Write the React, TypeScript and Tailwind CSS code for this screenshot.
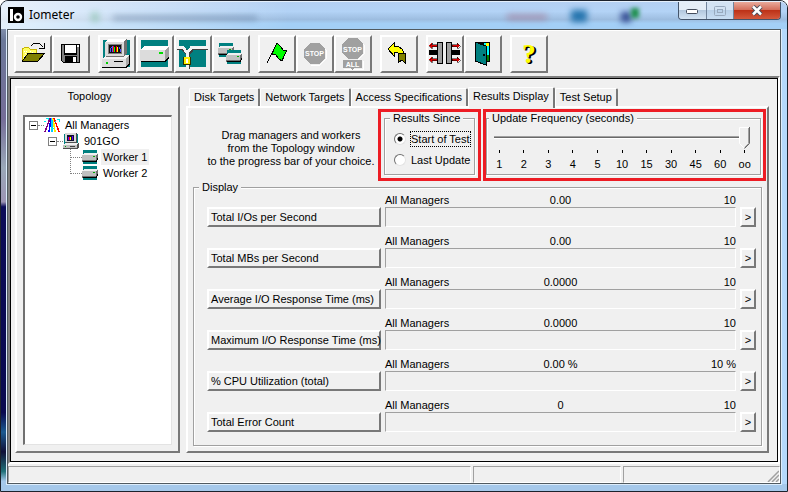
import { useState, type ReactNode } from "react";

const tabs = ["Disk Targets", "Network Targets", "Access Specifications", "Results Display", "Test Setup"];

const rows = [
  { name: "Total I/Os per Second", value: "0.00", max: "10" },
  { name: "Total MBs per Second", value: "0.00", max: "10" },
  { name: "Average I/O Response Time (ms)", value: "0.0000", max: "10" },
  { name: "Maximum I/O Response Time (ms)", value: "0.0000", max: "10" },
  { name: "% CPU Utilization (total)", value: "0.00 %", max: "10 %" },
  { name: "Total Error Count", value: "0", max: "10" },
];

const frequencies = ["1", "2", "3", "4", "5", "10", "15", "30", "45", "60", "oo"];

const raised =
  "border-2 border-t-white border-l-white border-r-[#787878] border-b-[#787878] bg-[#f0f0f0]";
const etched =
  "min-w-0 border border-[#a0a0a0] shadow-[1px_1px_0_#fff,inset_1px_1px_0_#fff]";

function Glyph({ children, size = 38 }: { children: ReactNode; size?: number }) {
  return (
    <svg viewBox={`0 0 ${size} ${size}`} width={size} height={size} shapeRendering="crispEdges" className="shrink-0" aria-hidden="true">
      {children}
    </svg>
  );
}

function OpenIcon() {
  return (
    <Glyph>
      <path d="M8.500 26V14l2-1.500h4l2 2h6v4" fill="#ffff60" stroke="#c8b400" />
      <path d="M10 16h1M12 16h1M14 18h1M11 18h1M16 16h1M10 21h1M12 20h1M18 17h1" stroke="#fff" />
      <path d="M8.500 26l6-8h16.500l-7 8z" fill="#808000" stroke="#000" />
      <path d="M17 11l3-3h5l4 4M30 8v5h-5" fill="none" stroke="#000" />
    </Glyph>
  );
}

function SaveIcon() {
  return (
    <Glyph>
      <path d="M9 9h19v19H11l-2-2z" fill="#000" />
      <path d="M10 10h17v17H11l-1-1z" fill="#808080" />
      <rect x="12" y="9" width="13" height="11" fill="#000" />
      <rect x="13" y="10" width="11" height="8" fill="#fff" />
      <rect x="25" y="10" width="2" height="2" fill="#fff" />
      <rect x="13" y="21" width="12" height="7" fill="#000" />
      <rect x="21" y="22" width="3" height="5" fill="#fff" />
    </Glyph>
  );
}

function ComputerShape() {
  return (
    <>
      <rect x="5" y="5" width="27" height="27" fill="#008080" />
      <path d="M4 24l5-4h23v8l-4 5H4z" fill="#000" />
      <path d="M4 24l4-4h23v8l-3 4H4z" fill="#a8a8a8" />
      <path d="M4 24l4-4h23l-3 4z" fill="#f4f4f4" />
      <rect x="4" y="24" width="24" height="8" fill="#dcdcdc" />
      <path d="M8 7l3-3h18v14l-3 4H8z" fill="#707070" />
      <path d="M7 7l3-3h18l-2 3z" fill="#fff" />
      <rect x="7" y="7" width="19" height="14" fill="#dcdcdc" />
      <rect x="10" y="9" width="14" height="10" fill="#808080" />
      <rect x="11" y="10" width="12" height="8" fill="#101010" />
      <path d="M12 17v-3l2-2v5M22 17v-3l-1-2" stroke="#5050ff" fill="none" />
      <path d="M15.500 17v-6M18.500 17v-6" stroke="#f00" />
      <path d="M16.500 17v-5" stroke="#0f0" />
      <path d="M19.500 17v-5" stroke="#ff0" />
      <rect x="8" y="27" width="2" height="2" fill="#0c0" />
      <rect x="16" y="26" width="9" height="1" fill="#000" />
      <path d="M4 32.500h24l4-4" stroke="#000" fill="none" />
    </>
  );
}

function DriveShape() {
  return (
    <>
      <rect x="5" y="5" width="27" height="27" fill="#008080" />
      <path d="M4 15l5-4h24v11l-4 5H5l-1-1z" fill="#808080" />
      <path d="M4 15l5-4h24l-4 4z" fill="#fff" />
      <rect x="4" y="15" width="25" height="11" fill="#dcdcdc" />
      <path d="M29 15l4-4v11l-4 4z" fill="#a0a0a0" />
      <path d="M5 26.500h24l4-4" fill="none" stroke="#000" />
      <rect x="23" y="17" width="4" height="2" fill="#0d0" />
    </>
  );
}

function SmallDriveShape() {
  return (
    <>
      <rect x="1" y="1" width="14" height="14" fill="#008080" />
      <path d="M0 6l3-2h13v6l-2 3H0z" fill="#707070" />
      <path d="M0 6l3-2h13l-2 2z" fill="#f0f0f0" />
      <rect x="0" y="6" width="14" height="5" fill="#c0c0c0" />
      <rect x="11" y="7" width="2" height="1" fill="#0a0" />
      <path d="M1 12.500h13l2-3" fill="none" stroke="#000" />
    </>
  );
}

function NetworkIcon() {
  return (
    <Glyph>
      <rect x="5" y="5" width="27" height="27" fill="#008080" />
      <path d="M3 13h6l5 6 5-6h15M13.500 18v16" fill="none" stroke="#404040" strokeWidth="4" />
      <path d="M3 12h6l4 6 5-6h16M13 18v16" fill="none" stroke="#f4f4f4" strokeWidth="3" />
      <rect x="9" y="22" width="8" height="8" fill="#303000" />
      <rect x="10" y="22" width="6" height="7" fill="#fe0" />
      <rect x="12" y="24" width="2" height="4" fill="#fff" />
    </Glyph>
  );
}

function DrivePairIcon() {
  return (
    <Glyph>
      <g transform="translate(6 7)"><SmallDriveShape /></g>
      <g transform="translate(14 14)"><SmallDriveShape /></g>
    </Glyph>
  );
}

function FlagIcon() {
  return (
    <Glyph>
      <path d="M9 28L19 8" stroke="#000" fill="none" />
      <path d="M19 8l4 4 2 3h4l-3 6-2 5-3-2-3-4-4-1 2-5z" fill="#0f0" stroke="#000" />
    </Glyph>
  );
}

function StopIcon() {
  return (
    <Glyph>
      <path d="M15 9h9l6 6v9l-6 6h-9" fill="none" stroke="#fff" />
      <path d="M14 8h9l6 6v9l-6 6h-9l-6-6v-9z" fill="#a0a0a0" />
      <text x="18.500" y="21" fontSize="7" fontWeight="700" textAnchor="middle" fill="#fff">STOP</text>
    </Glyph>
  );
}

function StopAllIcon() {
  return (
    <Glyph>
      <path d="M15 4h9l6 6v9l-6 6" fill="none" stroke="#fff" />
      <path d="M14 3h9l6 6v9l-6 6h-9l-6-6V9z" fill="#a0a0a0" />
      <path d="M10 34h19v-8" fill="none" stroke="#fff" />
      <path d="M9 25h19v8h-8l-2 2-2-2H9z" fill="#a0a0a0" />
      <text x="18.500" y="17" fontSize="7" fontWeight="700" textAnchor="middle" fill="#fff">STOP</text>
      <text x="18.500" y="32" fontSize="7" fontWeight="700" textAnchor="middle" fill="#fff">ALL</text>
    </Glyph>
  );
}

function UndoIcon() {
  return (
    <Glyph>
      <path d="M18 18h7v10l-3-3-4 3z" fill="#808000" stroke="#000" />
      <path d="M8 14l6-6v3h4l4 3 2 4h-6l-1-1h-3v4z" fill="#ff0" stroke="#000" />
    </Glyph>
  );
}

function ConnectIcon() {
  return (
    <Glyph>
      <path d="M3 15h9v5H3zM26 15h8v5h-8z" fill="#000" />
      <rect x="11.500" y="7.500" width="5" height="21" fill="#a0a0a0" stroke="#000" />
      <rect x="20.500" y="7.500" width="5" height="21" fill="#a0a0a0" stroke="#000" />
      <g fill="#e00000" stroke="#000" strokeWidth=".5">
        <path d="M3 10.500l3-3v2h5v2H6v2z" />
        <path d="M3 24.500l3-3v2h5v2H6v2z" />
        <path d="M34 10.500l-3-3v2h-5v2h5v2z" />
        <path d="M34 24.500l-3-3v2h-5v2h5v2z" />
      </g>
    </Glyph>
  );
}

function DoorIcon() {
  return (
    <Glyph>
      <rect x="11" y="7" width="15" height="20" fill="#000" />
      <rect x="20" y="8" width="5" height="13" fill="#0ff" />
      <rect x="22" y="8" width="3" height="3" fill="#ff0" />
      <rect x="20" y="20" width="5" height="6" fill="#008000" />
      <path d="M11 7l11 4v19l-11-4z" fill="#008080" stroke="#000" />
      <rect x="19" y="19" width="2" height="2" fill="#000" />
    </Glyph>
  );
}

function HelpIcon() {
  return (
    <span className="font-['Liberation_Serif',serif] text-[27px] leading-none font-bold text-[#ffff00] [text-shadow:1px_1px_0_#000,2px_1px_0_#000]">
      ?
    </span>
  );
}

const toolbar = [
  [
    { label: "Open", icon: <OpenIcon /> },
    { label: "Save", icon: <SaveIcon /> },
  ],
  [
    { label: "New manager", icon: <Glyph><ComputerShape /></Glyph> },
    { label: "New disk worker", icon: <Glyph><DriveShape /></Glyph> },
    { label: "New network worker", icon: <NetworkIcon /> },
    { label: "Duplicate worker", icon: <DrivePairIcon /> },
  ],
  [
    { label: "Start tests", icon: <FlagIcon /> },
    { label: "Stop test", icon: <StopIcon /> },
    { label: "Stop all tests", icon: <StopAllIcon /> },
  ],
  [{ label: "Reset", icon: <UndoIcon /> }],
  [
    { label: "Disconnect", icon: <ConnectIcon /> },
    { label: "Exit", icon: <DoorIcon /> },
  ],
  [{ label: "About", icon: <HelpIcon /> }],
];

function TitleBar() {
  return (
    <header className="relative flex h-7 shrink-0 items-start overflow-hidden rounded-t-[7px] border-t border-[#e4effb] bg-[linear-gradient(#b4d0f2,#b3d3f6_35%,#9dbde0_65%,#a3cff6_80%)]">
      <div className="absolute inset-y-0 left-0 w-72 bg-gradient-to-r from-white/70 to-transparent" />
      <div className="absolute top-3.5 left-28 h-1 w-36 bg-[#48658c]/50 blur-[3px]" />
      <div className="absolute top-2.5 left-[90px] h-2.5 w-2 bg-[#40a060]/30 blur-[3px]" />
      <div className="absolute top-3 right-60 h-1.5 w-10 bg-[#a05068]/40 blur-[3px]" />
      <div className="absolute top-2 right-[200px] h-3 w-4 bg-[#2474ae] blur-[3px]" />
      <div className="absolute top-2.5 right-[156px] h-2.5 w-2.5 bg-[#304890] blur-[3px]" />
      <div className="absolute top-1.5 right-[148px] h-2.5 w-2 bg-[#209050] blur-[2px]" />
      <div className="relative flex flex-1 items-center gap-[5px] pt-[5px] pl-[7px]">
        <svg viewBox="0 0 16 16" width="16" height="16" aria-hidden="true">
          <rect width="16" height="16" fill="#000" />
          <rect x="2" y="2" width="3" height="12" fill="#fff" />
          <circle cx="10" cy="10" r="3" fill="none" stroke="#fff" strokeWidth="2.400" />
        </svg>
        <h1 className="font-['Noto_Sans',sans-serif] text-[12px] leading-4 text-black">Iometer</h1>
      </div>
      <div className="relative mr-1.5 flex h-[18px] overflow-hidden rounded-b-[4px] border border-t-0 border-[#44546a]">
        <button aria-label="Minimize" className="flex w-7 items-center justify-center border-r border-[#71849c] bg-[linear-gradient(#e4edf7_45%,#b3c8de_50%,#d4e4f4)]">
          <svg width="13" height="8" viewBox="0 0 13 8"><rect x=".5" y="2.500" width="11" height="4" rx="1" fill="#fff" stroke="#444c5c" /></svg>
        </button>
        <button aria-label="Maximize" disabled className="flex w-[27px] items-center justify-center border-r border-[#71849c] bg-[linear-gradient(#d4e3f3_45%,#b9d0e8_50%,#c9def3)]">
          <svg width="12" height="10" viewBox="0 0 12 10" fill="none" stroke="#98a9bd"><rect x=".5" y=".5" width="11" height="9" rx="1" /><rect x="3.500" y="3.500" width="5" height="3" /></svg>
        </button>
        <button aria-label="Close" className="flex w-[46px] items-center justify-center bg-[linear-gradient(#e9aa9b,#d4705c_45%,#bd3218_50%,#d4593c)]">
          <svg width="12" height="11" viewBox="0 0 12 11"><path d="M2 1.500l8 8M10 1.500l-8 8" stroke="#474c5a" strokeWidth="4.500" /><path d="M2 1.500l8 8M10 1.500l-8 8" stroke="#fff" strokeWidth="2.500" /></svg>
        </button>
      </div>
    </header>
  );
}

function Toggle() {
  return (
    <button aria-label="Collapse" className="flex size-[9px] shrink-0 items-center justify-center border border-[#808080] bg-white">
      <span className="h-px w-[5px] bg-black" />
    </button>
  );
}

function Branch({ last = false }: { last?: boolean }) {
  return (
    <svg width="12" height="16" viewBox="0 0 12 16" shapeRendering="crispEdges" aria-hidden="true" className="shrink-0">
      <path d={last ? "M.5 0v9M1 8.500h11" : "M.5 0v16M1 8.500h11"} stroke="#808080" strokeDasharray="1 1" fill="none" />
    </svg>
  );
}

function SmallIcon({ children }: { children: ReactNode }) {
  return (
    <svg viewBox="0 0 16 16" width="16" height="16" shapeRendering="crispEdges" aria-hidden="true" className="shrink-0">
      {children}
    </svg>
  );
}

function Topology() {
  return (
    <aside className={`${raised} flex w-[165px] shrink-0 flex-col px-1.5 pb-1.5`}>
      <h2 className="mb-[11px] pr-4 text-center leading-4">Topology</h2>
      <ul className="flex-1 border border-t-2 border-l-2 border-t-[#707070] border-l-[#707070] border-r-[#e3e3e3] border-b-[#e3e3e3] bg-white pl-1">
        <li>
          <div className="flex h-4 items-center">
            <Toggle />
            <span className="w-1.5 border-t border-dotted border-[#808080]" />
            <SmallIcon>
              <g fill="none" strokeWidth="1.500">
                <path d="M6 1L1 15" stroke="#800080" />
                <path d="M7 1L5 15" stroke="#00f" />
                <path d="M8 1v14" stroke="#0cf" />
                <path d="M9 1l2 14" stroke="#fe0" />
                <path d="M10 1l5 14" stroke="#f00" />
              </g>
              <path d="M2 1h2v2M0 4h2M13 2h2v3M7 11h3M11 4h1" stroke="#0ee" fill="none" />
            </SmallIcon>
            <span className="pl-[5px] leading-4">All Managers</span>
          </div>
          <ul>
            <li>
              <div className="flex h-4 items-center pl-[19px]">
                <Toggle />
                <span className="w-1.5 border-t border-dotted border-[#808080]" />
                <SmallIcon>
                  <rect x="1" y="1" width="14" height="14" fill="#008080" />
                  <path d="M0 12l2-2h14v4l-2 2H0z" fill="#505050" />
                  <path d="M0 12l2-2h13l-1 2z" fill="#f0f0f0" />
                  <rect x="0" y="12" width="14" height="3" fill="#c0c0c0" />
                  <rect x="3" y="0" width="11" height="10" fill="#505050" />
                  <rect x="2" y="0" width="11" height="9" fill="#d8d8d8" />
                  <rect x="4" y="2" width="7" height="6" fill="#101030" />
                  <path d="M5.500 7V4M9.500 7V3" stroke="#60f" />
                  <path d="M6.500 7V4" stroke="#f00" />
                  <path d="M7.500 7V4" stroke="#ff0" />
                  <rect x="2" y="13" width="1" height="1" fill="#0a0" />
                  <rect x="7" y="13" width="5" height="1" fill="#404040" />
                </SmallIcon>
                <span className="pl-[5px] leading-4">901GO</span>
              </div>
              <ul>
                {["Worker 1", "Worker 2"].map((w, i) => (
                  <li key={w} className="flex h-4 items-center pl-[41px]">
                    <Branch last={i === 1} />
                    <SmallIcon><SmallDriveShape /></SmallIcon>
                    <span className={`ml-[3px] px-0.5 leading-4 ${i === 0 ? "bg-[#f0f0f0]" : ""}`}>{w}</span>
                  </li>
                ))}
              </ul>
            </li>
          </ul>
        </li>
      </ul>
    </aside>
  );
}

function ResultsSince() {
  const [since, setSince] = useState("Start of Test");
  return (
    <div className="h-[72px] w-[103px] shrink-0 border-[3px] border-[#ed1c24] px-[3px]">
      <fieldset className={`${etched} h-[63px]`}>
        <legend className="ml-[5px] bg-[#f0f0f0] px-[3px] leading-[13px]">Results Since</legend>
        <div className="flex flex-col items-start gap-[5px] pt-1.5 pl-[9px]">
          {["Start of Test", "Last Update"].map((o) => (
            <label key={o} className="flex h-4 items-center gap-1">
              <input
                type="radio"
                name="since"
                checked={since === o}
                onChange={() => setSince(o)}
                className="size-3 appearance-none rounded-full border border-t-[#707070] border-l-[#707070] border-r-[#e3e3e3] border-b-[#e3e3e3] bg-white checked:bg-[radial-gradient(circle,#000_2px,#fff_3px)]"
              />
              <span className={`border border-dotted leading-[14px] ${since === o ? "border-black" : "border-transparent"}`}>{o}</span>
            </label>
          ))}
        </div>
      </fieldset>
    </div>
  );
}

function UpdateFrequency() {
  const [step, setStep] = useState(10);
  return (
    <div className="h-[72px] min-w-0 flex-1 border-[3px] border-[#ed1c24] pr-0.5">
      <fieldset className={`${etched} h-[63px]`}>
        <legend className="ml-0.5 bg-[#f0f0f0] px-[3px] leading-[13px]">
          <label htmlFor="frequency">Update Frequency (seconds)</label>
        </legend>
        <div className="pr-[3px]">
          <div className="relative mx-[7px] h-6">
            <input
              id="frequency"
              type="range"
              min={0}
              max={10}
              value={step}
              onChange={(e) => setStep(Number(e.target.value))}
              className="block h-6 w-full appearance-none bg-[linear-gradient(#a0a0a0_33%,#696969_33%_66%,#fff_66%)] bg-[length:100%_3px] bg-center bg-no-repeat [&::-webkit-slider-thumb]:h-6 [&::-webkit-slider-thumb]:w-[11px] [&::-webkit-slider-thumb]:appearance-none"
            />
            <div className="pointer-events-none absolute inset-y-0 right-[11px] left-0">
              <svg width="11" height="23" viewBox="0 0 11 23" className="absolute top-0.5" style={{ left: `${step * 10}%` }} aria-hidden="true">
                <path d="M.5 .5h10v16l-5 5-5-5z" fill="#f0f0f0" />
                <path d="M10 .5H.5v16l5 5" fill="none" stroke="#fff" />
                <path d="M9.500 1v15.500l-4 4" fill="none" stroke="#a0a0a0" />
                <path d="M10.500 0v16.500l-5 5" fill="none" stroke="#696969" />
              </svg>
            </div>
          </div>
          <div className="flex">
            {frequencies.map((f) => (
              <div key={f} className="flex min-w-0 flex-1 flex-col items-center">
                <span className="mt-px mb-[5px] h-[3px] w-px bg-black" />
                <span className="leading-[13px]">{f}</span>
              </div>
            ))}
          </div>
        </div>
      </fieldset>
    </div>
  );
}

function Display() {
  return (
    <fieldset className={`${etched} mx-[5px] mb-[5px] flex-1`}>
      <legend className="ml-[5px] bg-[#f0f0f0] px-[3px] leading-[13px]">Display</legend>
      <div className="flex flex-col gap-2 pr-[5px] pl-[13px]">
        {rows.map((r) => (
          <div key={r.name} className="flex items-end">
            <button className={`${raised} h-5 w-[174px] shrink-0 pl-0.5 text-left leading-4 whitespace-nowrap`}>{r.name}</button>
            <div className="mx-1 min-w-0 flex-1">
              <div className="grid grid-cols-3 leading-[13px]">
                <span>All Managers</span>
                <span className="text-center">{r.value}</span>
                <span className="text-right">{r.max}</span>
              </div>
              <div className="h-5 border border-t-[#a0a0a0] border-l-[#a0a0a0] border-r-white border-b-white" />
            </div>
            <button aria-label={`${r.name} details`} className={`${raised} h-5 w-4 shrink-0 text-center leading-4`}>&gt;</button>
          </div>
        ))}
      </div>
    </fieldset>
  );
}

export default function App() {
  const [active, setActive] = useState("Results Display");
  return (
    <div className="flex min-h-screen flex-col rounded-t-lg border border-[#1c222c] bg-[linear-gradient(0deg,#a5c8ea_7px,transparent_7px),linear-gradient(90deg,transparent_50%,#b4d8fb_50%),linear-gradient(#bccadb,#6a7898_8%,#756d98_24%,#9aa8b8_34%,#9c94b4_41%,#0c0c58_42%,#0a0a50_84%,#1c5a90_88%,#101038_92%,#207078_96%,#a5c8ea_98%)] pb-[7px] font-['Liberation_Sans',Arial,sans-serif] text-[11px] text-black">
      <TitleBar />
      <main className="mx-1.5 flex flex-1 flex-col border border-[#505a60] bg-[#f0f0f0] shadow-[0_0_0_1px_#dcecfb]">
        <div role="toolbar" aria-label="Main" className="flex gap-2 border-t border-white px-1.5 pt-1 pb-[3px]">
          {toolbar.map((group, i) => (
            <div key={i} className="flex">
              {group.map((b) => (
                <button key={b.label} aria-label={b.label} className={`${raised} flex size-[38px] items-center justify-center`}>
                  {b.icon}
                </button>
              ))}
            </div>
          ))}
        </div>
        <div className="flex flex-1 flex-col border-2 border-t-[#808080] border-l-[#808080] border-r-white border-b-white">
          <div className="flex flex-1 gap-1.5 border border-black pt-[7px] pr-2 pb-2 pl-1">
            <Topology />
            <section className="flex min-w-0 flex-1 flex-col">
              <div role="tablist" className="flex h-5 items-end pl-[3px]">
                {tabs.map((t) => (
                  <button
                    key={t}
                    role="tab"
                    aria-selected={t === active}
                    onClick={() => setActive(t)}
                    className={`rounded-t-[2px] border-t border-r-2 border-l border-t-white border-l-white border-r-[#787878] bg-[#f0f0f0] px-1 ${t === active ? "z-10 -mb-0.5 h-[21px] pb-1" : "h-[18px]"}`}
                  >
                    {t}
                  </button>
                ))}
              </div>
              <div role="tabpanel" className={`${raised} flex flex-1 flex-col`}>
                <div className="flex gap-0.5 pt-px pr-px">
                  <p className="w-[188px] shrink-0 pt-5 pl-[18px] text-center leading-[13px]">
                    Drag managers and workers
                    <br />
                    from the Topology window
                    <br />
                    to the progress bar of your choice.
                  </p>
                  <ResultsSince />
                  <UpdateFrequency />
                </div>
                <Display />
              </div>
            </section>
          </div>
        </div>
        <footer className="flex h-[19px] gap-0.5 pt-0.5">
          <div className="flex-1 border border-t-[#a0a0a0] border-l-[#a0a0a0] border-r-white border-b-white" />
          <div className="w-[148px] border border-t-[#a0a0a0] border-l-[#a0a0a0] border-r-white border-b-white" />
          <div className="flex w-[157px] items-end justify-end border border-t-[#a0a0a0] border-l-[#a0a0a0] border-r-white border-b-white">
            <svg width="12" height="12" viewBox="0 0 12 12" stroke="#a0a0a0" strokeWidth="1.500" aria-hidden="true">
              <path d="M1 12L12 1M5 12l7-7M9 12l3-3" />
            </svg>
          </div>
        </footer>
      </main>
    </div>
  );
}
